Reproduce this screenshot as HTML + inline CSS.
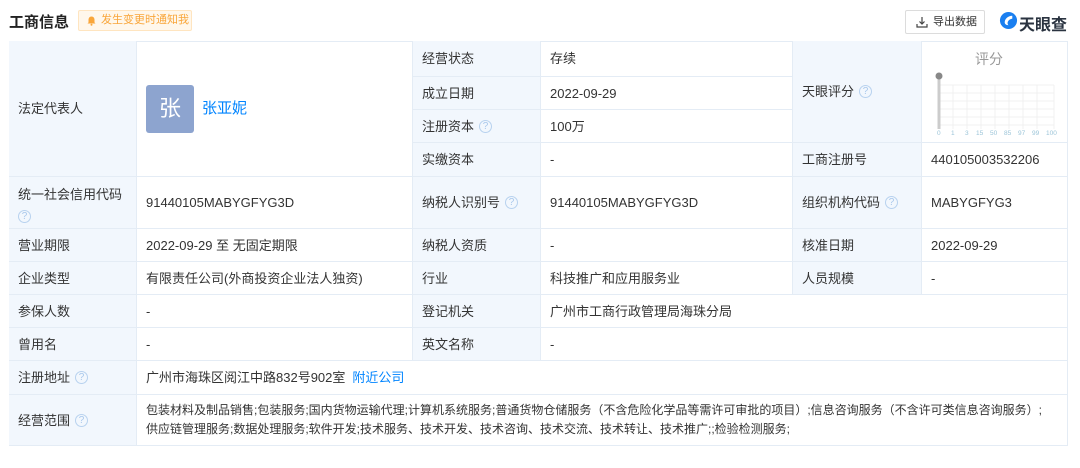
<!DOCTYPE html>
<html><head><meta charset="utf-8"><style>
*{margin:0;padding:0;box-sizing:border-box}
body{width:1080px;height:468px;background:#fff;font-family:"Liberation Sans","Noto Sans CJK SC",sans-serif;font-size:13px;color:#333;position:relative;overflow:hidden}
.c{position:absolute;border-right:1px solid #e4ecf5;border-bottom:1px solid #e4ecf5;padding-left:9px;display:flex;align-items:center;line-height:19px}
.l{background:#f2f7fd;color:#333}
.q{display:inline-block;width:13px;height:13px;border:1px solid #b8d2ef;border-radius:50%;color:#a9c8ec;font-size:10px;line-height:11px;text-align:center;margin-left:5px;vertical-align:middle}
a{color:#0084ff;text-decoration:none}
</style></head><body>
<div style="position:absolute;left:9px;top:11px;font-size:15px;font-weight:bold;color:#222">工商信息</div>
<div style="position:absolute;left:78px;top:10px;width:114px;height:21px;background:#fff7eb;border:1px solid #ffe5c0;border-radius:2px;color:#f9a63a;font-size:11px;line-height:19px;padding-left:22px">
<svg style="position:absolute;left:8px;top:5px" width="9" height="10" viewBox="0 0 9 10"><path d="M4.5 0.5C2.5 0.5 1.5 2 1.5 4V6.5L0.5 7.5H8.5L7.5 6.5V4C7.5 2 6.5 0.5 4.5 0.5Z" fill="#f9a63a"/><circle cx="4.5" cy="8.8" r="1" fill="#f9a63a"/></svg>发生变更时通知我</div>
<div style="position:absolute;left:905px;top:10px;width:80px;height:24px;border:1px solid #dcdcdc;border-radius:2px;font-size:11px;line-height:22px;padding-left:27px;color:#333">
<svg style="position:absolute;left:10px;top:5px" width="12" height="12" viewBox="0 0 12 12" fill="none" stroke="#444" stroke-width="1.2"><path d="M6 1V8M3.5 5.5L6 8L8.5 5.5M1 8V11H11V8"/></svg>导出数据</div>
<svg style="position:absolute;left:999px;top:11px" width="19" height="19" viewBox="0 0 20 20"><circle cx="10" cy="10" r="9" fill="#1a7ff0"/><path d="M14 5C10 5 6 8 6 12C6 14 8 15 10 15C8 13 9 9 14 8Z" fill="#fff"/></svg>
<div style="position:absolute;left:1019px;top:11px;font-size:16px;font-weight:bold;color:#2a3340">天眼查</div>

<div style="position:absolute;left:9px;top:41px;width:1059px;height:405px;border-top:1px solid #e4ecf5;border-left:1px solid #e4ecf5"></div>

<div class="c l" style="left:9px;top:41px;width:128px;height:136px">法定代表人</div>
<div class="c" style="left:137px;top:41px;width:276px;height:136px"><div style="width:48px;height:48px;background:#8da4cf;border-radius:3px;color:#fff;font-size:22px;text-align:center;line-height:48px">张</div><a style="margin-left:8px;font-size:15px">张亚妮</a></div>
<div class="c l" style="left:413px;top:41px;width:128px;height:36px">经营状态</div>
<div class="c" style="left:541px;top:41px;width:252px;height:36px">存续</div>
<div class="c l" style="left:413px;top:77px;width:128px;height:33px">成立日期</div>
<div class="c" style="left:541px;top:77px;width:252px;height:33px">2022-09-29</div>
<div class="c l" style="left:413px;top:110px;width:128px;height:33px">注册资本<span class="q">?</span></div>
<div class="c" style="left:541px;top:110px;width:252px;height:33px">100万</div>
<div class="c l" style="left:413px;top:143px;width:128px;height:34px">实缴资本</div>
<div class="c" style="left:541px;top:143px;width:252px;height:34px">-</div>
<div class="c l" style="left:793px;top:41px;width:129px;height:102px">天眼评分<span class="q">?</span></div>
<div class="c" style="left:922px;top:41px;width:146px;height:102px;display:block;padding:0">
<div style="position:absolute;left:53px;top:9px;font-size:14px;color:#999">评分</div>
<svg style="position:absolute;left:10px;top:30px" width="136" height="70" viewBox="0 0 136 70">
<g stroke="#f0f0f0" stroke-width="1"><path d="M7 14H122M7 22H122M7 30H122M7 38H122M7 46H122M7 54H122"/><path d="M21 14V58M35 14V58M49 14V58M63 14V58M77 14V58M91 14V58M105 14V58M122 14V58"/></g>
<rect x="5.5" y="5" width="3" height="53" fill="#ccc"/><circle cx="7" cy="5" r="3.5" fill="#888"/>
<g fill="#9bc4d8" font-size="6.5" font-family="Liberation Sans"><text x="5" y="64">0</text><text x="19" y="64">1</text><text x="33" y="64">3</text><text x="44" y="64">15</text><text x="58" y="64">50</text><text x="72" y="64">85</text><text x="86" y="64">97</text><text x="100" y="64">99</text><text x="114" y="64">100</text></g></svg></div>
<div class="c l" style="left:793px;top:143px;width:129px;height:34px">工商注册号</div>
<div class="c" style="left:922px;top:143px;width:146px;height:34px">440105003532206</div>

<div class="c l" style="left:9px;top:177px;width:128px;height:52px;display:block;padding-top:8px">统一社会信用代码<br><span class="q" style="margin-left:0;margin-top:3px">?</span></div>
<div class="c" style="left:137px;top:177px;width:276px;height:52px">91440105MABYGFYG3D</div>
<div class="c l" style="left:413px;top:177px;width:128px;height:52px">纳税人识别号<span class="q">?</span></div>
<div class="c" style="left:541px;top:177px;width:252px;height:52px">91440105MABYGFYG3D</div>
<div class="c l" style="left:793px;top:177px;width:129px;height:52px">组织机构代码<span class="q">?</span></div>
<div class="c" style="left:922px;top:177px;width:146px;height:52px">MABYGFYG3</div>
<div class="c l" style="left:9px;top:229px;width:128px;height:33px">营业期限</div>
<div class="c" style="left:137px;top:229px;width:276px;height:33px">2022-09-29 至 无固定期限</div>
<div class="c l" style="left:413px;top:229px;width:128px;height:33px">纳税人资质</div>
<div class="c" style="left:541px;top:229px;width:252px;height:33px">-</div>
<div class="c l" style="left:793px;top:229px;width:129px;height:33px">核准日期</div>
<div class="c" style="left:922px;top:229px;width:146px;height:33px">2022-09-29</div>
<div class="c l" style="left:9px;top:262px;width:128px;height:33px">企业类型</div>
<div class="c" style="left:137px;top:262px;width:276px;height:33px">有限责任公司(外商投资企业法人独资)</div>
<div class="c l" style="left:413px;top:262px;width:128px;height:33px">行业</div>
<div class="c" style="left:541px;top:262px;width:252px;height:33px">科技推广和应用服务业</div>
<div class="c l" style="left:793px;top:262px;width:129px;height:33px">人员规模</div>
<div class="c" style="left:922px;top:262px;width:146px;height:33px">-</div>
<div class="c l" style="left:9px;top:295px;width:128px;height:33px">参保人数</div>
<div class="c" style="left:137px;top:295px;width:276px;height:33px">-</div>
<div class="c l" style="left:413px;top:295px;width:128px;height:33px">登记机关</div>
<div class="c" style="left:541px;top:295px;width:527px;height:33px">广州市工商行政管理局海珠分局</div>
<div class="c l" style="left:9px;top:328px;width:128px;height:33px">曾用名</div>
<div class="c" style="left:137px;top:328px;width:276px;height:33px">-</div>
<div class="c l" style="left:413px;top:328px;width:128px;height:33px">英文名称</div>
<div class="c" style="left:541px;top:328px;width:527px;height:33px">-</div>
<div class="c l" style="left:9px;top:361px;width:128px;height:34px">注册地址<span class="q">?</span></div>
<div class="c" style="left:137px;top:361px;width:931px;height:34px">广州市海珠区阅江中路832号902室<a style="margin-left:7px">附近公司</a></div>
<div class="c l" style="left:9px;top:395px;width:128px;height:51px">经营范围<span class="q">?</span></div>
<div class="c" style="left:137px;top:395px;width:931px;height:51px;font-size:12px;line-height:19px;padding-right:4px">包装材料及制品销售;包装服务;国内货物运输代理;计算机系统服务;普通货物仓储服务（不含危险化学品等需许可审批的项目）;信息咨询服务（不含许可类信息咨询服务）;<br>供应链管理服务;数据处理服务;软件开发;技术服务、技术开发、技术咨询、技术交流、技术转让、技术推广;;检验检测服务;</div>
</body></html>
